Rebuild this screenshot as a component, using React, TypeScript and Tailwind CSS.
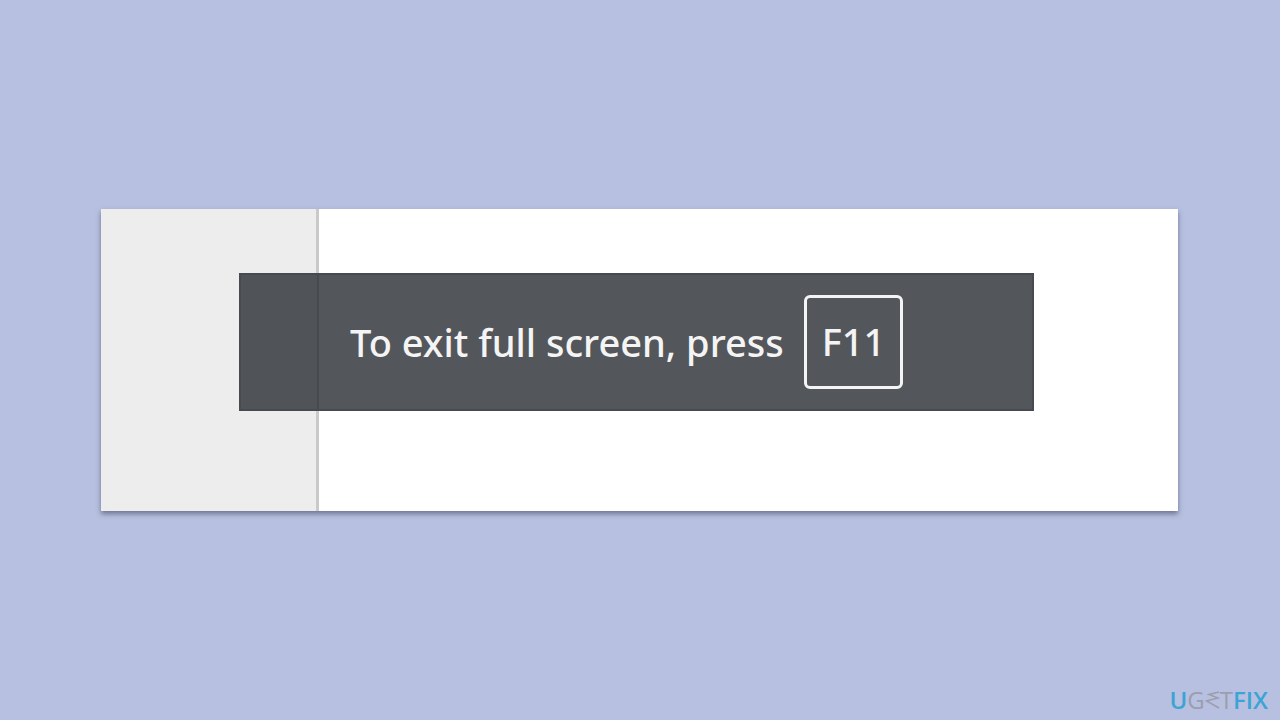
function Logo() {
  return (
    <div className="flex items-center font-['Open_Sans','Noto_Sans',sans-serif] text-2xl leading-6 text-[#9b9eac]">
      <span className="font-semibold text-[#3ca4d4]">U</span>
      <span>G</span>
      <svg viewBox="0 0 15 20" className="h-5 w-[15px]" fill="none" stroke="currentColor" strokeWidth="1.6" role="img" aria-label="E">
        <path d="M14 2 L4 4.5 L13 8 L1.5 11 L14 18" />
      </svg>
      <span>T</span>
      <span className="font-semibold text-[#3ca4d4]">FIX</span>
    </div>
  );
}

function FullScreenNotice() {
  return (
    <div
      role="status"
      className="relative flex items-center gap-5 border-2 border-[#484a51] bg-[#53565b] py-5 pl-[109px] font-['Noto_Sans','Open_Sans',sans-serif] text-[38px] leading-[54px] font-medium text-[#f4f4f5]"
    >
      {/* page divider showing through the notice */}
      <div className="absolute inset-y-0 left-0 w-[78px] border-r-2 border-[#484a4f] bg-[#505358]" />
      <p className="whitespace-nowrap">To exit full screen, press</p>
      <kbd className="rounded-md border-3 border-[#f4f4f5] px-[15px] pt-4 pb-[18px] font-['Noto_Sans','Open_Sans',sans-serif]">F11</kbd>
    </div>
  );
}

export default function App() {
  return (
    <div className="grid min-h-screen grid-rows-[1fr_auto_1fr] bg-[#b7c0e0]">
      <main className="relative row-start-2 mr-[102px] ml-[101px] bg-white pt-16 pr-36 pb-[100px] pl-[138px] shadow-[0_3px_5px_rgba(50,55,80,0.55)]">
        <aside className="absolute inset-y-0 left-0 w-[218px] border-r-3 border-[#cacaca] bg-[#ededed]" />
        <FullScreenNotice />
      </main>
      <footer className="row-start-3 self-end justify-self-end pr-3 pb-2">
        <Logo />
      </footer>
    </div>
  );
}
